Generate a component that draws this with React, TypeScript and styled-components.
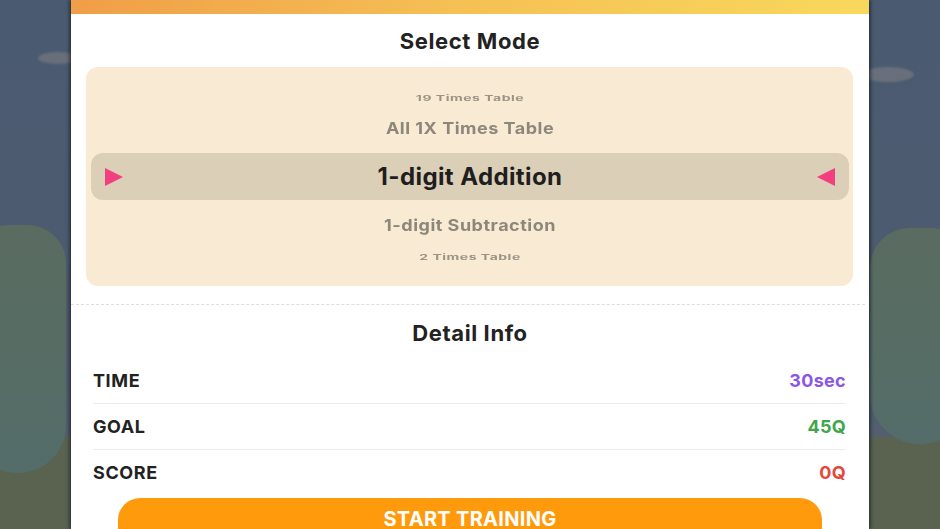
import styled, { createGlobalStyle } from "styled-components";

const GlobalStyle = createGlobalStyle`
  html, body {
    margin: 0;
    padding: 0;
    overflow: hidden;
  }
  body {
    font-family: "Inter", "Noto Sans", sans-serif;
  }
`;

interface ModeOption {
  label: string;
  depth: 0 | 1 | 2;
}

const modes: ModeOption[] = [
  { label: "19 Times Table", depth: 2 },
  { label: "All 1X Times Table", depth: 1 },
  { label: "1-digit Addition", depth: 0 },
  { label: "1-digit Subtraction", depth: 1 },
  { label: "2 Times Table", depth: 2 },
];

const details = [
  { label: "TIME", value: "30sec", color: "#8a56e8" },
  { label: "GOAL", value: "45Q", color: "#3fa64c" },
  { label: "SCORE", value: "0Q", color: "#e2483c" },
];

const Arrow = ({ dir }: { dir: "left" | "right" }) => (
  <svg width="20" height="20" viewBox="0 0 20 20">
    {dir === "right" ? (
      <path d="M1 1 L19 10 L1 19 Z" fill="#f23f80" />
    ) : (
      <path d="M19 1 L1 10 L19 19 Z" fill="#f23f80" />
    )}
  </svg>
);

const App = () => {
  return (
    <Scene>
      <GlobalStyle />
      <Cloud $left={38} $top={52} $w={40} $h={12} />
      <Cloud $left={862} $top={67} $w={52} $h={15} />
      <Ground />
      <Hill $left={-30} $top={225} $w={96} $h={248} />
      <Hill $left={870} $top={228} $w={100} $h={216} />

      <Card>
        <TopBar />
        <SectionTitle>Select Mode</SectionTitle>
        <Picker>
          {modes.map((m) =>
            m.depth === 0 ? (
              <Selected key={m.label}>
                <Arrow dir="right" />
                <ItemText $depth={0}>{m.label}</ItemText>
                <Arrow dir="left" />
              </Selected>
            ) : (
              <Item key={m.label} $depth={m.depth}>
                <ItemText $depth={m.depth}>{m.label}</ItemText>
              </Item>
            )
          )}
        </Picker>
        <Divider />
        <SectionTitle $tall>Detail Info</SectionTitle>
        <DetailList>
          {details.map((d) => (
            <DetailRow key={d.label}>
              <DetailLabel>{d.label}</DetailLabel>
              <DetailValue $color={d.color}>{d.value}</DetailValue>
            </DetailRow>
          ))}
        </DetailList>
        <StartButton>START TRAINING</StartButton>
      </Card>
    </Scene>
  );
};

const Scene = styled.div`
  position: relative;
  width: 100%;
  height: 529px;
  overflow: hidden;
  background: linear-gradient(180deg, #4a5a70 0%, #4d5b70 45%, #56606e 100%);
`;

const Cloud = styled.div<{ $left: number; $top: number; $w: number; $h: number }>`
  position: absolute;
  left: ${({ $left }) => $left}px;
  top: ${({ $top }) => $top}px;
  width: ${({ $w }) => $w}px;
  height: ${({ $h }) => $h}px;
  border-radius: 50%;
  background: rgba(130, 130, 132, 0.55);
  filter: blur(1px);
`;

const Ground = styled.div`
  position: absolute;
  left: 0;
  right: 0;
  bottom: 0;
  height: 92px;
  background: #596350;
`;

const Hill = styled.div<{ $left: number; $top: number; $w: number; $h: number }>`
  position: absolute;
  left: ${({ $left }) => $left}px;
  top: ${({ $top }) => $top}px;
  width: ${({ $w }) => $w}px;
  height: ${({ $h }) => $h}px;
  border-radius: 48px 48px 60px 60px;
  background: linear-gradient(180deg, #5a6b60 0%, #566d65 60%, #546c6a 100%);
`;

const Card = styled.div`
  position: relative;
  z-index: 1;
  width: 798px;
  height: 100%;
  margin: 0 auto;
  background: #ffffff;
  display: flex;
  flex-direction: column;
  box-shadow: -2px 0 3px rgba(20, 24, 32, 0.55), 2px 0 3px rgba(20, 24, 32, 0.55);

  & > * {
    flex-shrink: 0;
  }
`;

const TopBar = styled.div`
  height: 14px;
  background: linear-gradient(90deg, #f09e48 0%, #f5c155 50%, #f8d85c 100%);
`;

const SectionTitle = styled.div<{ $tall?: boolean }>`
  height: ${({ $tall }) => ($tall ? 55 : 53)}px;
  display: flex;
  align-items: center;
  justify-content: center;
  font-size: 22px;
  font-weight: 700;
  color: #222222;
  letter-spacing: 0.6px;
`;

const Picker = styled.div`
  margin: 0 16px 0 15px;
  height: 219px;
  box-sizing: border-box;
  padding: 16px 4px 16px 5px;
  border-radius: 12px;
  background: #f9ebd3;
  display: flex;
  flex-direction: column;
`;

const Item = styled.div<{ $depth: 1 | 2 }>`
  height: ${({ $depth }) => ($depth === 2 ? 28 : 34)}px;
  display: flex;
  align-items: center;
  justify-content: center;

  &:nth-child(2) {
    margin-bottom: 8px;
  }
  &:nth-child(4) {
    margin-top: 8px;
  }
`;

const ItemText = styled.span<{ $depth: 0 | 1 | 2 }>`
  display: inline-block;
  font-weight: 700;
  font-size: ${({ $depth }) => ($depth === 0 ? 24 : $depth === 1 ? 18 : 14)}px;
  color: ${({ $depth }) => ($depth === 0 ? "#1e1e1e" : $depth === 1 ? "#8d877b" : "#9b9486")};
  transform: scaleY(${({ $depth }) => ($depth === 0 ? 1 : $depth === 1 ? 0.9 : 0.55)});
  letter-spacing: ${({ $depth }) => ($depth === 0 ? 0.4 : 0.5)}px;
`;

const Selected = styled.div`
  height: 47px;
  border-radius: 12px;
  background: #dccfb7;
  display: flex;
  align-items: center;
  justify-content: space-between;
  padding: 0 13px;
`;

const Divider = styled.div`
  margin: 18px 4px 0 0;
  border-top: 1px dashed #dedede;
`;

const DetailList = styled.div`
  margin: 0 23px 0 22px;
  display: flex;
  flex-direction: column;
`;

const DetailRow = styled.div`
  height: 45px;
  margin-top: -2px;
  display: flex;
  align-items: center;
  justify-content: space-between;

  & + & {
    margin-top: 0;
    border-top: 1px solid #ececec;
  }
`;

const DetailLabel = styled.span`
  font-size: 18px;
  font-weight: 700;
  color: #222222;
  letter-spacing: 0.6px;
`;

const DetailValue = styled.span<{ $color: string }>`
  font-size: 18px;
  font-weight: 700;
  letter-spacing: 0.3px;
  color: ${({ $color }) => $color};
`;

const StartButton = styled.button`
  margin: 3px 47px 0 47px;
  height: 56px;
  border: none;
  border-radius: 22px;
  background: #ff9a0c;
  color: #ffffff;
  font-family: inherit;
  font-size: 20px;
  font-weight: 700;
  letter-spacing: 0.3px;
  padding: 0 0 14px;
  cursor: pointer;
`;

export default App;
